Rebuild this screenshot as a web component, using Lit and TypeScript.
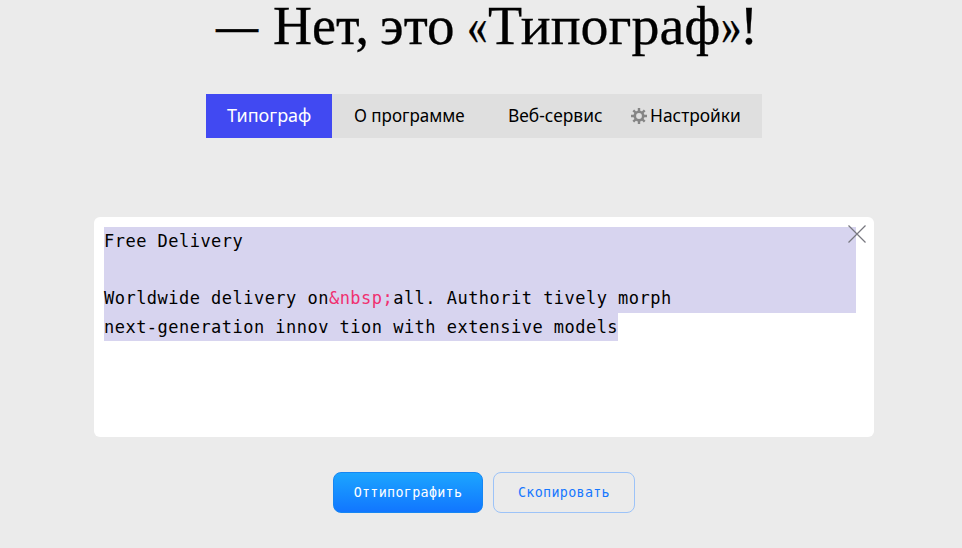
import { LitElement, html, css } from "lit";
import { customElement } from "lit/decorators.js";

@customElement("app-root")
export class AppRoot extends LitElement {
  static styles = css`
    :host {
      display: flex;
      flex-direction: column;
      box-sizing: border-box;
      height: 548px;
      background: #ebebeb;
      color: #000;
      padding-left: 94px;
      font-family: "Noto Sans", "Open Sans", sans-serif;
    }
    h1 {
      display: flex;
      flex: none;
      margin: 0 0 0 122px;
      height: 94px;
      font: 400 54px/52px "Liberation Serif", serif;
      -webkit-text-stroke: 0.3px #000;
      white-space: pre;
      box-sizing: border-box;
    }
    h1 span, .fit {
      display: inline-block;
      transform-origin: 0 50%;
      white-space: pre;
    }
    .dash { width: 57px; transform: translateY(-1px) scaleX(0.78); }
    .w1 { width: 107px; }
    .w2 { width: 87px; transform: scaleX(1.02); }
    .quote { width: 21px; transform: scaleX(0.76); }
    .w3 { width: 233px; transform: scaleX(1.035); }
    .quote.end { width: 19px; }
    nav {
      display: flex;
      flex: none;
      width: 556px;
      height: 44px;
      margin-left: 112px;
      background: #dfdfdf;
      font-size: 18px;
      line-height: 43px;
      white-space: nowrap;
    }
    .tab { box-sizing: border-box; flex: none; }
    .t1 { width: 126px; padding-left: 21px; background: #4149f2; color: #fff; }
    .t2 { width: 154px; padding-left: 22px; }
    .t2 .fit { transform: scaleX(0.943); }
    .t3 { width: 145px; padding-left: 22px; }
    .t3 .fit { transform: scaleX(0.965); }
    .t4 { width: 131px; height: 43px; display: flex; align-items: center; gap: 3px; }
    .t4 .fit { transform: scaleX(0.965); }
    .editor {
      position: relative;
      flex: none;
      box-sizing: border-box;
      width: 780px;
      height: 220px;
      margin-top: 79px;
      padding: 10px;
      border-radius: 6px;
      background: #fff;
      font: 17px/28.5px "DejaVu Sans Mono", monospace;
      letter-spacing: 0.475px;
    }
    .line {
      width: 752px;
      height: 28.5px;
      background: #d7d4ef;
      white-space: pre;
    }
    .last { width: 514px; }
    .entity { color: #f03070; }
    .close { position: absolute; left: 754px; top: 8px; }
    .actions { display: flex; gap: 10px; margin: 35px 0 0 239px; }
    button {
      box-sizing: border-box;
      height: 41px;
      padding: 0;
      border-radius: 8px;
      font: 13.4px/20px "DejaVu Sans Mono", monospace;
      letter-spacing: 0.3px;
    }
    .primary {
      width: 150px;
      border: 1px solid #1686f3;
      background: linear-gradient(#1ca5ff, #1176ff);
      color: #fff;
    }
    .secondary {
      width: 142px;
      border: 1px solid #9cc3f8;
      background: transparent;
      color: #1677ff;
    }
  `;

  render() {
    return html`
      <h1><span class="dash">—</span><span class="w1">Нет, </span><span class="w2">это </span><span class="quote">«</span><span class="w3">Типограф</span><span class="quote end">»</span><span>!</span></h1>
      <nav>
        <div class="tab t1"><span class="fit">Типограф</span></div>
        <div class="tab t2"><span class="fit">О программе</span></div>
        <div class="tab t3"><span class="fit">Веб-сервис</span></div>
        <div class="tab t4">
          <svg width="16" height="16" viewBox="0 0 16 16" fill="none" stroke="#858585">
            <circle cx="8" cy="8" r="4.2" stroke-width="2.6" />
            <path stroke-width="2.4" d="M8 0v3M8 13v3M0 8h3M13 8h3M2.3 2.3l2.2 2.2M11.5 11.5l2.2 2.2M13.7 2.3l-2.2 2.2M4.5 11.5l-2.2 2.2" />
          </svg>
          <span class="fit">Настройки</span>
        </div>
      </nav>
      <section class="editor">
        <div class="line">Free Delivery</div>
        <div class="line"></div>
        <div class="line">Worldwide delivery on<span class="entity">&amp;nbsp;</span>all. Authorit tively morph</div>
        <div class="line last">next-generation innov tion with extensive models</div>
        <svg class="close" width="18" height="18" viewBox="0 0 18 18" stroke="#77777f" stroke-width="1.2">
          <path d="M.5 .5l17 17M17.5 .5l-17 17" />
        </svg>
      </section>
      <div class="actions">
        <button class="primary">Оттипографить</button>
        <button class="secondary">Скопировать</button>
      </div>
    `;
  }
}
